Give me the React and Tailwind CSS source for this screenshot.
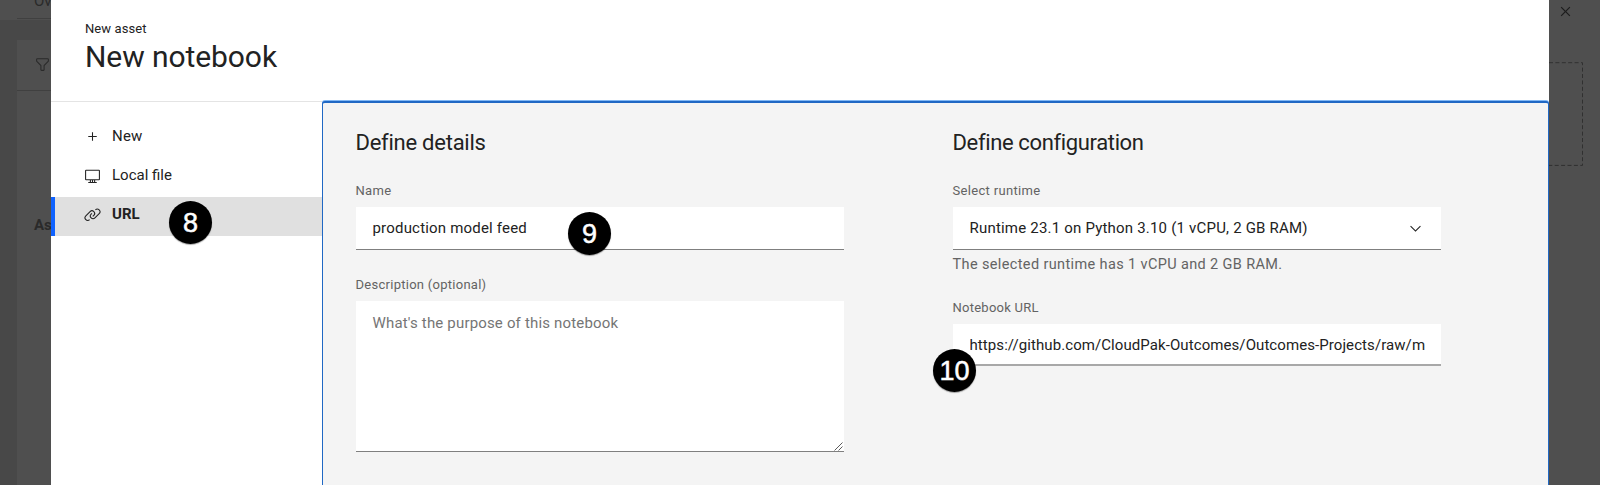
function Icon({ d, size, className = "" }) {
  return (
    <svg viewBox="0 0 32 32" width={size} height={size} fill="currentColor" className={`shrink-0 ${className}`} aria-hidden="true">
      <path d={d} />
    </svg>
  );
}

const icons = {
  add: "M17 15V8h-2v7H8v2h7v7h2v-7h7v-2z",
  screen:
    "M28 5H4A2 2 0 0 0 2 7V23a2 2 0 0 0 2 2h7v3H8v2H24V28H21V25h7a2 2 0 0 0 2-2V7A2 2 0 0 0 28 5ZM15 28H13V25h2ZM19 28H17V25h2Zm9-5H4V7H28Z",
  link:
    "M29.25 6.76a6 6 0 0 0-8.5 0l1.42 1.42a4 4 0 1 1 5.67 5.67l-8 8a4 4 0 1 1-5.67-5.66l1.41-1.42-1.41-1.42-1.42 1.42a6 6 0 0 0 0 8.5A6 6 0 0 0 17 25a6 6 0 0 0 4.27-1.76l8-8A6 6 0 0 0 29.25 6.76ZM4.19 24.82a4 4 0 0 1 0-5.67l8-8a4 4 0 0 1 5.67 0A3.94 3.94 0 0 1 19 14a4 4 0 0 1-1.17 2.85L15.71 19l1.42 1.42 2.12-2.12a6 6 0 0 0-8.51-8.51l-8 8a6 6 0 0 0 0 8.51A6 6 0 0 0 7 28a6.07 6.07 0 0 0 4.28-1.76L9.86 24.82A4 4 0 0 1 4.19 24.82Z",
  filter:
    "M18 28H14a2 2 0 0 1-2-2V18.41L4.59 11A2 2 0 0 1 4 9.59V6A2 2 0 0 1 6 4H26a2 2 0 0 1 2 2V9.59A2 2 0 0 1 27.41 11L20 18.41V26A2 2 0 0 1 18 28ZM6 6V9.59l8 8V26h4V17.59l8-8V6Z",
  close:
    "M17.41 16 24 9.41 22.59 8 16 14.59 9.41 8 8 9.41 14.59 16 8 22.59 9.41 24 16 17.41 22.59 24 24 22.59z",
  chevron: "M16 22 6 12l1.4-1.4 8.6 8.6 8.6-8.6L26 12z",
};

function Marker({ children, className }) {
  return (
    <div
      className={`absolute flex size-[43px] items-center justify-center rounded-full bg-black pt-[2px] font-['Liberation_Sans',sans-serif] text-[27px] leading-none text-white shadow-[0_1px_1px_rgba(0,0,0,0.35)] [-webkit-text-stroke:0.5px_white] ${className}`}
    >
      {children}
    </div>
  );
}

function Label({ children, className = "" }) {
  return <div className={`h-5 text-[13px] leading-5 text-[#636363] ${className}`}>{children}</div>;
}

function BackgroundLeft() {
  return (
    <div className="flex w-[51px] shrink-0 flex-col overflow-hidden bg-[#484848] text-[#2a2a2a]">
      <div className="h-5 shrink-0 bg-[#4f4f4f] pl-[17px]">
        <div className="h-[19px] overflow-hidden border-b border-[#404040] pl-[17px]">
          <div className="-mt-[9px] whitespace-nowrap text-[15px] leading-5">Ov</div>
        </div>
      </div>
      <div className="mt-5 ml-[17px] flex grow flex-col bg-[#4f4f4f]">
        <div className="flex h-[51px] items-center border-b border-[#404040] pb-px pl-[17px]">
          <Icon d={icons.filter} size={17} />
        </div>
        <div className="mt-[124px] pl-[17px] text-[15px] leading-5 font-bold whitespace-nowrap">As</div>
      </div>
    </div>
  );
}

function BackgroundRight() {
  return (
    <div className="w-[51px] shrink-0 overflow-hidden bg-[#4f4f4f] text-[#1c1c1c]">
      <div className="flex h-[62px] pt-[2px] pl-[7px]">
        <Icon d={icons.close} size={19} />
      </div>
      <svg width="36" height="105" viewBox="0 0 36 105" fill="none" className="block" aria-hidden="true">
        <path d="M0 .7H33.5V103.4H0" stroke="#303030" strokeDasharray="4 2.4" />
      </svg>
    </div>
  );
}

export default function App() {
  return (
    <div className="relative flex h-[485px] w-[1600px] overflow-hidden font-['Roboto',sans-serif] text-[15px] text-[#222222]">
      <BackgroundLeft />
      <main className="flex w-[1498px] shrink-0 flex-col bg-white">
        <header className="h-[101px] pt-[19px] pl-[34px]">
          <div className="text-[13px] leading-5 tracking-[0.1px]">New asset</div>
          <h1 className="text-[30px] leading-9 tracking-[-0.08px]">New notebook</h1>
        </header>
        <div className="flex grow">
          <nav className="w-[271px] shrink-0 border-t border-[#e4e4e4] pt-[16px]">
            <div className="flex h-[39px] items-center gap-[11px] pb-[3px] pl-[33px]">
              <Icon d={icons.add} size={17} />
              <span className="tracking-[0.2px]">New</span>
            </div>
            <div className="flex h-10 items-center gap-[11px] pb-[4px] pl-[33px]">
              <Icon d={icons.screen} size={17} />
              <span>Local file</span>
            </div>
            <div className="flex h-[39px] items-center gap-[11px] border-l-4 border-[#0f62fe] bg-[#e0e0e0] pb-[4px] pl-[29px]">
              <Icon d={icons.link} size={17} />
              <span className="font-bold">URL</span>
            </div>
          </nav>
          <section className="flex grow rounded-t-[3px] border-x border-t-2 border-[#2068c4] bg-[#f4f4f4] pt-[25px] pl-[32.5px] shadow-[0_-1px_0_#82b8f5]">
            <div className="w-[488px] shrink-0">
              <h2 className="h-[30px] text-[22px] leading-[30px] tracking-[-0.25px]">Define details</h2>
              <Label className="mt-[23px] tracking-[0.3px]">Name</Label>
              <div className="mt-[6px] flex h-[43px] items-center border-b border-[#7f7f7f] bg-white px-[17px] tracking-[0.19px]">
                production model feed
              </div>
              <Label className="mt-[25px] tracking-[0.27px]">Description (optional)</Label>
              <div className="mt-[6px] flex h-[151px] flex-col justify-between border-b border-[#7f7f7f] bg-white">
                <div className="px-[17px] pt-[12px] leading-5 tracking-[0.17px] text-[#757575]">
                  What's the purpose of this notebook
                </div>
                <svg width="9" height="9" viewBox="0 0 9 9" className="mr-px self-end" aria-hidden="true">
                  <path d="M.5 8.5l8-8M4.5 8.5l4-4" stroke="#5c5c5c" fill="none" />
                </svg>
              </div>
            </div>
            <div className="ml-[109px] w-[488px] shrink-0">
              <h2 className="h-[30px] text-[22px] leading-[30px] tracking-[-0.36px]">Define configuration</h2>
              <Label className="mt-[23px] tracking-[0.32px]">Select runtime</Label>
              <div className="mt-[6px] flex h-[43px] items-center justify-between border-b border-[#7f7f7f] bg-white px-[17px] tracking-[0.2px]">
                <span>Runtime 23.1 on Python 3.10 (1 vCPU, 2 GB RAM)</span>
                <Icon d={icons.chevron} size={17} />
              </div>
              <div className="mt-[5px] h-5 text-[14.5px] leading-5 tracking-[0.37px] text-[#636363]">
                The selected runtime has 1 vCPU and 2 GB RAM.
              </div>
              <Label className="mt-[23px] tracking-[0.25px]">Notebook URL</Label>
              <div className="mt-[6px] h-[42px] border-b-2 border-[#a8a8a8] bg-white px-[17px]">
                <div className="w-[455px] overflow-hidden leading-[42px] tracking-[0.08px] whitespace-nowrap">
                  https://github.com/CloudPak-Outcomes/Outcomes-Projects/raw/m
                </div>
              </div>
            </div>
          </section>
        </div>
      </main>
      <BackgroundRight />
      <Marker className="top-[201px] left-[169px]">8</Marker>
      <Marker className="top-[212px] left-[568px]">9</Marker>
      <Marker className="top-[349px] left-[933px]">10</Marker>
    </div>
  );
}
